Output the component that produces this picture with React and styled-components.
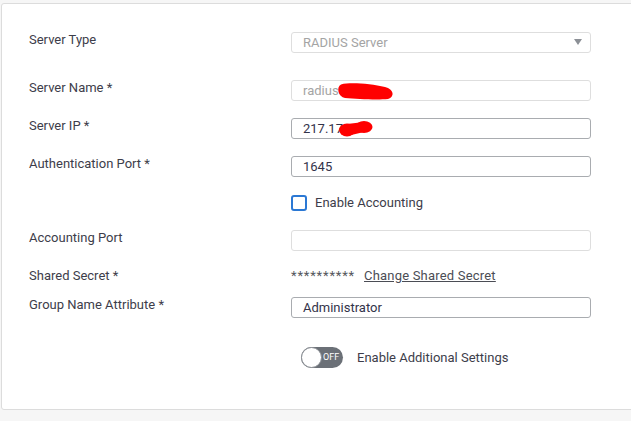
import styled, { createGlobalStyle } from "styled-components";

const GlobalStyle = createGlobalStyle`
  html, body {
    margin: 0;
    padding: 0;
    background: #f6f6f6;
  }
  body {
    font-family: Roboto, "Liberation Sans", Arial, sans-serif;
    -webkit-font-smoothing: antialiased;
  }
`;

const Page = styled.div`
  width: 631px;
  height: 421px;
  overflow: hidden;
  padding: 3px 0 0 1px;
  box-sizing: border-box;
`;

const Card = styled.div`
  width: 660px;
  height: 407px;
  box-sizing: border-box;
  background: #ffffff;
  border: 1px solid #dcdcdc;
  border-radius: 3px;
  padding: 28px 0 0 27px;
`;

const Row = styled.div`
  display: flex;
  align-items: ${(p) => (p.center ? "center" : "flex-start")};
  margin-top: ${(p) => p.space || 0}px;
`;

const Label = styled.div`
  width: 262px;
  flex: none;
  font-size: 13px;
  line-height: 16px;
  color: #3d3d4a;
`;

const Field = styled.div`
  position: relative;
  width: 300px;
  height: 21px;
  box-sizing: border-box;
  border: 1px solid ${(p) => (p.muted ? "#dedede" : "#a9acb0")};
  border-radius: 3px;
  padding: 0 11px;
  display: flex;
  align-items: center;
  font-size: 13px;
  color: ${(p) => (p.muted ? "#a4a4a4" : "#33334a")};
`;

const Arrow = styled.span`
  position: absolute;
  right: 8px;
  top: 6px;
  width: 0;
  height: 0;
  border-left: 4px solid transparent;
  border-right: 4px solid transparent;
  border-top: 6px solid #8c9096;
`;

const Redact = styled.svg`
  position: absolute;
  left: ${(p) => p.$left}px;
  top: ${(p) => p.$top}px;
  width: ${(p) => p.$w}px;
  height: ${(p) => p.$h}px;
  overflow: visible;
`;

const Check = styled.span`
  width: 16px;
  height: 16px;
  box-sizing: border-box;
  border: 2px solid #2b78d4;
  border-radius: 3px;
  margin-right: 8px;
  flex: none;
`;

const Inline = styled.div`
  display: flex;
  align-items: center;
  font-size: 13px;
  line-height: 16px;
  color: #3d3d4a;
`;

const Stars = styled.span`
  font-size: 13px;
  color: #55575c;
  letter-spacing: 0.8px;
  margin-right: 9px;
`;

const Link = styled.a`
  font-size: 13px;
  color: #4b4d55;
  text-decoration: underline;
  cursor: pointer;
  letter-spacing: 0.2px;
`;

const Toggle = styled.span`
  position: relative;
  width: 42px;
  height: 21px;
  box-sizing: border-box;
  border-radius: 11px;
  background: #6b7077;
  margin: 0 14px 0 10px;
  flex: none;
  &::before {
    content: "";
    position: absolute;
    left: 0;
    top: 0;
    width: 21px;
    height: 21px;
    box-sizing: border-box;
    border-radius: 50%;
    background: #ffffff;
    border: 1px solid #8a8e94;
  }
  &::after {
    content: "OFF";
    position: absolute;
    left: 22px;
    top: 5px;
    font-size: 9px;
    line-height: 11px;
    color: #ffffff;
  }
`;

function App() {
  return (
    <>
      <GlobalStyle />
      <Page>
        <Card>
          <Row>
            <Label>Server Type</Label>
            <Field muted>
              RADIUS Server
              <Arrow />
            </Field>
          </Row>
          <Row space={27}>
            <Label>Server Name *</Label>
            <Field muted>
              radius
              <Redact $left={45} $top={1} $w={58} $h={18} viewBox="0 0 58 18">
                <path
                  d="M4 2.5 C14 0 34 2 48 5 C57 7 58 15 51 17 C40 18 20 17 8 16 C1 15 -1 5 4 2.5 Z"
                  fill="#ff0000"
                />
              </Redact>
            </Field>
          </Row>
          <Row space={17}>
            <Label>Server IP *</Label>
            <Field>
              217.17
              <Redact $left={47} $top={2} $w={34} $h={16} viewBox="0 0 34 16">
                <ellipse cx="8" cy="9" rx="8" ry="6.5" fill="#ff0000" />
                <ellipse cx="25" cy="6" rx="8.5" ry="6" fill="#ff0000" />
                <path d="M8 3 L25 1 L25 11 L8 15 Z" fill="#ff0000" />
              </Redact>
            </Field>
          </Row>
          <Row space={17}>
            <Label>Authentication Port *</Label>
            <Field>1645</Field>
          </Row>
          <Row space={18} center>
            <Label />
            <Inline>
              <Check />
              Enable Accounting
            </Inline>
          </Row>
          <Row space={19}>
            <Label>Accounting Port</Label>
            <Field muted />
          </Row>
          <Row space={17} center>
            <Label>Shared Secret *</Label>
            <Inline>
              <Stars>**********</Stars>
              <Link>Change Shared Secret</Link>
            </Inline>
          </Row>
          <Row space={13}>
            <Label>Group Name Attribute *</Label>
            <Field>Administrator</Field>
          </Row>
          <Row space={29} center>
            <Label />
            <Inline>
              <Toggle />
              Enable Additional Settings
            </Inline>
          </Row>
        </Card>
      </Page>
    </>
  );
}

export default App;
